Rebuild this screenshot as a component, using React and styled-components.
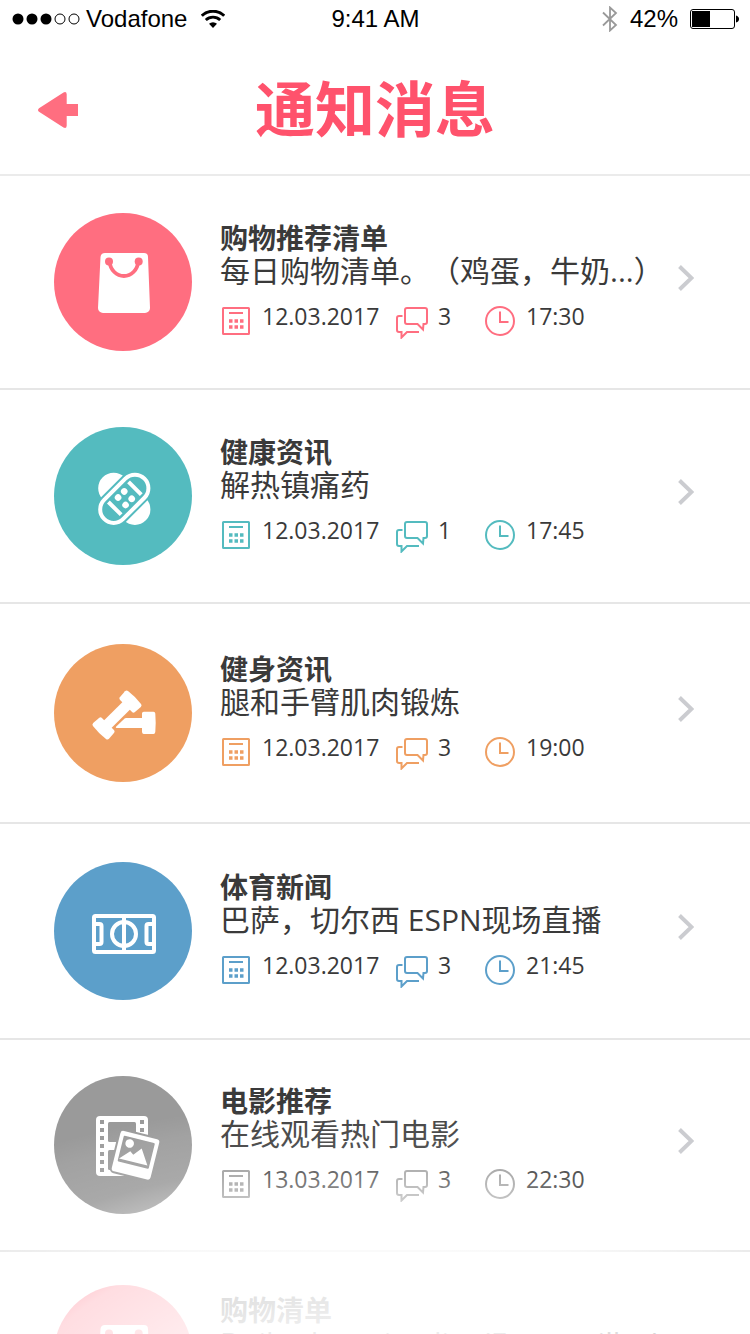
import React from "react";
import styled, { createGlobalStyle } from "styled-components";

const items = [
  {
    id: 1,
    title: "购物推荐清单",
    text: "每日购物清单。（鸡蛋，牛奶...）",
    date: "12.03.2017",
    comments: 3,
    time: "17:30",
    color: "#ff6e80",
    icon: BagIcon,
    height: 214
  },
  {
    id: 2,
    title: "健康资讯",
    text: "解热镇痛药",
    date: "12.03.2017",
    comments: 1,
    time: "17:45",
    color: "#54bbbf",
    icon: BandageIcon,
    height: 214
  },
  {
    id: 3,
    title: "健身资讯",
    text: "腿和手臂肌肉锻炼",
    date: "12.03.2017",
    comments: 3,
    time: "19:00",
    color: "#ef9f62",
    icon: DumbbellIcon,
    height: 220
  },
  {
    id: 4,
    title: "体育新闻",
    text: "巴萨，切尔西 ESPN现场直播",
    date: "12.03.2017",
    comments: 3,
    time: "21:45",
    color: "#5c9fca",
    icon: FieldIcon,
    height: 216
  },
  {
    id: 5,
    title: "电影推荐",
    text: "在线观看热门电影",
    date: "13.03.2017",
    comments: 3,
    time: "22:30",
    color: "#9a9a9a",
    icon: FilmIcon,
    height: 212
  },
  {
    id: 6,
    title: "购物清单",
    text: "Daily shopping list (Eggs, milk...)",
    date: "13.03.2017",
    comments: 3,
    time: "22:45",
    color: "#ff6e80",
    icon: BagIcon,
    height: 206
  }
];

function BagIcon() {
  return (
    <svg viewBox="0 0 138 138" aria-hidden="true">
      <path
        fill="#fff"
        d="M51 40h39a4 4 0 0 1 4 4l2 51a5 5 0 0 1-5 5H49a5 5 0 0 1-5-5l2.500-51a4.500 4.500 0 0 1 4.500-4z"
      />
      <circle cx="55" cy="48.500" r="4" fill="currentColor" />
      <circle cx="84.700" cy="48.500" r="4" fill="currentColor" />
      <path
        d="M55.500 49c1 8 7 14 14.400 14s13.400-6 14.400-14"
        fill="none"
        stroke="currentColor"
        strokeWidth="3.800"
      />
    </svg>
  );
}

function BandageIcon() {
  return (
    <svg viewBox="0 0 138 138" aria-hidden="true">
      <g transform="translate(70.3 71.800)">
        <rect x="-30.500" y="-15.500" width="61" height="31" rx="15.500" fill="#fff" transform="rotate(45)" />
        <g transform="rotate(-45)">
          <rect x="-32.500" y="-17.500" width="65" height="35" rx="17.500" fill="currentColor" />
          <rect x="-28.500" y="-13.500" width="57" height="27" rx="13.500" fill="none" stroke="#fff" strokeWidth="4" />
          <path d="M-13.500-9V9M15-9V9" stroke="#fff" strokeWidth="4" />
          <g fill="#fff">
            <circle cx="-3.500" cy="-5.300" r="3.300" />
            <circle cx="5.200" cy="-5.300" r="3.300" />
            <circle cx="-3.500" cy="5.300" r="3.300" />
            <circle cx="5.200" cy="5.300" r="3.300" />
          </g>
        </g>
      </g>
    </svg>
  );
}

function DumbbellIcon() {
  return (
    <svg viewBox="0 0 138 138" aria-hidden="true">
      <g fill="#fff">
        <path d="M62.500 84a.7.7 0 0 1-.5-1.200l8.600-8.200a2 2 0 0 1 1.400-.6h16V69.500q0-1.800 1.800-1.800h9.700q1.600 0 1.800 1.800.8 9.300 0 18.600-.2 1.900-1.800 1.900h-9.700q-1.600 0-1.800-1.900V84z" />
        <g transform="translate(63 71) rotate(-45)">
          <rect x="-15" y="-5.300" width="30" height="10.600" />
          <path d="M14.500-10.500 22.500-11.200q2 0 2.300 2Q26 0 24.800 9.200q-.3 2-2.300 2L14.500 10.500q-1.700-.2-1.700-2V-8.500q0-1.800 1.700-2z" />
          <path d="M-14.500-10.500-22.500-11.200q-2 0-2.300 2Q-26 0-24.800 9.200q.3 2 2.300 2L-14.500 10.500q1.700-.2 1.700-2V-8.500q0-1.800-1.700-2z" />
        </g>
      </g>
    </svg>
  );
}

function FieldIcon() {
  return (
    <svg viewBox="0 0 138 138" fill="none" stroke="#fff" strokeWidth="4" aria-hidden="true">
      <rect x="40" y="54" width="60" height="36" rx="1.500" />
      <circle cx="70" cy="72" r="12" />
      <path d="M70 54v36M40 62h5.500a2 2 0 0 1 2 2v16a2 2 0 0 1-2 2H40M100 62h-5.500a2 2 0 0 0-2 2v16a2 2 0 0 0 2 2h5.500" />
    </svg>
  );
}

function FilmIcon() {
  return (
    <svg viewBox="0 0 138 138" aria-hidden="true">
      <rect x="42" y="40" width="52" height="60" rx="4" fill="#fff" />
      <g fill="currentColor">
        {[44, 52, 60, 68, 76, 84, 92].map(y => (
          <path key={y} d={`M46 ${y}h4v4h-4zM86 ${y}h4v4h-4z`} />
        ))}
        <rect x="54" y="46" width="28" height="20" rx="1.500" />
        <rect x="54" y="74" width="28" height="20" rx="1.500" />
      </g>
      <g transform="translate(81.500 79.300) rotate(14)">
        <rect x="-22" y="-22.800" width="44" height="45.500" rx="5" fill="currentColor" />
        <rect x="-20" y="-20.800" width="40" height="41.500" rx="3" fill="#fff" />
        <rect x="-16" y="-16.300" width="32" height="26.500" rx="1" fill="currentColor" />
        <circle cx="-8.500" cy="-10" r="4.300" fill="#fff" />
        <path d="M-15.200 7.200-6-2.600l3.700 2.500L4.400-8 14 7z" fill="#fff" />
      </g>
    </svg>
  );
}

function CalendarIcon() {
  return (
    <MetaSvg viewBox="0 0 32 34" aria-hidden="true">
      <rect x="3" y="3" width="26" height="26" rx=".5" />
      <path d="M9 8h14" />
      <path d="M9 16h3.500m2 0H18m2 0h3.500M9 22h3.500m2 0H18m2 0h3.500" strokeWidth="3.500" />
    </MetaSvg>
  );
}

function ChatIcon() {
  return (
    <MetaSvg viewBox="0 0 32 34" aria-hidden="true">
      <path d="M11 3h18a2 2 0 0 1 2 2v12a2 2 0 0 1-2 2h-1.500l-.5 5.500-5.500-5.500H11a2 2 0 0 1-2-2V5a2 2 0 0 1 2-2z" />
      <path d="M6.500 11H3a2 2 0 0 0-2 2v12a2 2 0 0 0 2 2h2.500v5.500L11 27h12" />
    </MetaSvg>
  );
}

function ClockIcon() {
  return (
    <MetaSvg viewBox="0 0 32 34" aria-hidden="true">
      <circle cx="16" cy="16" r="14" />
      <path d="M16 6.500V17h8.500" />
    </MetaSvg>
  );
}

function StatusBar() {
  return (
    <Status>
      <StatusLeft>
        <svg width="68" height="12" viewBox="0 0 68 12" aria-hidden="true">
          <circle cx="6" cy="6" r="5.500" />
          <circle cx="20" cy="6" r="5.500" />
          <circle cx="34" cy="6" r="5.500" />
          <circle cx="48" cy="6" r="5" fill="none" stroke="#000" />
          <circle cx="62" cy="6" r="5" fill="none" stroke="#000" />
        </svg>
        <Carrier>Vodafone</Carrier>
        <svg width="24" height="18" viewBox="0 0 24 18" fill="none" stroke="#000" aria-hidden="true">
          <path d="M.8 5.800a16 16 0 0 1 22.400 0" strokeWidth="3" />
          <path d="M4.800 10a10.300 10.300 0 0 1 14.400 0" strokeWidth="2.800" />
          <path d="M8 13.800a5.800 5.800 0 0 1 8 0L12 18z" fill="#000" stroke="none" />
        </svg>
      </StatusLeft>
      <span>9:41 AM</span>
      <StatusRight>
        <svg width="16" height="26" viewBox="0 0 16 26" fill="none" stroke="#999" strokeWidth="1.800" aria-hidden="true">
          <path d="M1 6.500 14 19l-6 5.500v-23L14 7 1 19.500" />
        </svg>
        <span>42%</span>
        <svg width="49" height="20" viewBox="0 0 49 20" aria-hidden="true">
          <rect x=".5" y=".5" width="44" height="19" rx="2.500" fill="none" stroke="#000" />
          <rect x="2" y="2" width="18" height="16" />
          <path d="M46 6.500q3 1 3 3.500t-3 3.500z" />
        </svg>
      </StatusRight>
    </Status>
  );
}

function Notification({ item }) {
  const Icon = item.icon;
  return (
    <Item>
      <ItemLink href={`#notification-${item.id}`} $height={item.height}>
        <Badge $color={item.color}>
          <Icon />
        </Badge>
        <Content>
          <ItemTitle>{item.title}</ItemTitle>
          <ItemText>{item.text}</ItemText>
          <MetaRow $color={item.color}>
            <Meta>
              <CalendarIcon />
              <span>{item.date}</span>
            </Meta>
            <Meta>
              <ChatIcon />
              <span>{item.comments}</span>
            </Meta>
            <Meta>
              <ClockIcon />
              <span>{item.time}</span>
            </Meta>
          </MetaRow>
        </Content>
        <Chevron viewBox="0 0 16 26" aria-hidden="true">
          <path d="M1.500 1.500 13.500 13l-12 11.500" />
        </Chevron>
      </ItemLink>
    </Item>
  );
}

function App() {
  return (
    <Screen>
      <GlobalStyle />
      <StatusBar />
      <Header>
        <BackButton type="button" aria-label="返回">
          <svg width="40" height="36" viewBox="0 0 40 36" aria-hidden="true">
            <path d="M1 16.200 25.500.5q3-1.300 3.200 1.800V12H40v12H28.700v9.700q-.2 3.100-3.200 1.800L1 19.800q-2-1.800 0-3.600z" />
          </svg>
        </BackButton>
        <Title>通知消息</Title>
      </Header>
      <List>
        {items.map(item => (
          <Notification key={item.id} item={item} />
        ))}
      </List>
      <Fade />
    </Screen>
  );
}

const GlobalStyle = createGlobalStyle`
  * {
    box-sizing: border-box;
  }

  body {
    margin: 0;
    background-color: #fff;
    color: #3a3a3a;
    font-family: "Open Sans", "Noto Sans CJK SC", sans-serif;
  }
`;

const Screen = styled.div`
  position: relative;
  display: flex;
  flex-direction: column;
  height: 100vh;
  overflow: hidden;
`;

const Status = styled.div`
  display: grid;
  grid-template-columns: 1fr auto 1fr;
  align-items: center;
  flex-shrink: 0;
  height: 38px;
  padding: 0 11px 0 12px;
  color: #000;
  font-family: "Liberation Sans", sans-serif;
  font-size: 24px;
  line-height: 28px;
`;

const StatusLeft = styled.div`
  display: flex;
  align-items: center;
`;

const StatusRight = styled.div`
  display: flex;
  align-items: center;
  justify-content: flex-end;
  gap: 12px;
`;

const Carrier = styled.span`
  margin: 0 14px 0 6px;
`;

const Header = styled.header`
  display: grid;
  grid-template-columns: 1fr auto 1fr;
  align-items: center;
  flex-shrink: 0;
  height: 138px;
  padding: 8px 38px 0;
  border-bottom: 2px solid #ebebeb;
`;

const BackButton = styled.button`
  display: flex;
  justify-self: start;
  padding: 0;
  border: 0;
  background: none;
  cursor: pointer;

  svg {
    fill: #ff6e80;
  }
`;

const Title = styled.h1`
  margin: 0;
  padding-bottom: 8px;
  color: #ff526c;
  font-family: "Noto Sans CJK SC", sans-serif;
  font-size: 60px;
  font-weight: 700;
  line-height: 80px;
`;

const List = styled.ul`
  flex: 1;
  min-height: 0;
  margin: 0;
  padding: 0;
  overflow: hidden;
  list-style: none;
`;

const Item = styled.li`
  border-bottom: 2px solid #e6e6e6;
`;

const ItemLink = styled.a`
  display: flex;
  align-items: center;
  height: ${props => props.$height - 2}px;
  padding: 0 56px 0 54px;
  color: inherit;
  text-decoration: none;
`;

const Badge = styled.div`
  flex-shrink: 0;
  width: 138px;
  height: 138px;
  border-radius: 50%;
  background-color: ${props => props.$color};
  color: ${props => props.$color};

  svg {
    display: block;
  }
`;

const Content = styled.div`
  flex: 1;
  min-width: 0;
  margin-left: 28px;
  padding-bottom: 4px;
`;

const ItemTitle = styled.h2`
  margin: 0;
  font-size: 28px;
  font-weight: 700;
  line-height: 34px;
`;

const ItemText = styled.p`
  margin: 0;
  font-size: 30px;
  font-weight: 400;
  line-height: 32px;
  white-space: nowrap;
  text-spacing-trim: space-all;
`;

const MetaRow = styled.div`
  display: grid;
  grid-template-columns: 176px 88px auto;
  margin-top: 15px;

  svg {
    color: ${props => props.$color};
  }
`;

const Meta = styled.div`
  display: flex;
  align-items: flex-end;
  gap: 10px;
  height: 37px;

  span {
    align-self: flex-start;
    font-size: 23px;
    line-height: 28px;
  }
`;

const MetaSvg = styled.svg`
  flex-shrink: 0;
  width: 32px;
  height: 34px;
  fill: none;
  stroke: currentColor;
  stroke-width: 2;
`;

const Chevron = styled.svg`
  flex-shrink: 0;
  width: 16px;
  height: 26px;
  margin-bottom: 8px;
  fill: none;
  stroke: #cbccd0;
  stroke-width: 4;
`;

/* soft white dome over the end of the list */
const Fade = styled.div`
  position: absolute;
  right: 0;
  bottom: 0;
  left: 0;
  height: 240px;
  pointer-events: none;
  background: radial-gradient(
    83% 300px at 50% 306px,
    rgba(255, 255, 255, 0.92) 0%,
    rgba(255, 255, 255, 0.9) 30%,
    rgba(255, 255, 255, 0.85) 40%,
    rgba(255, 255, 255, 0.77) 56%,
    rgba(255, 255, 255, 0.3) 74%,
    rgba(255, 255, 255, 0.15) 80%,
    rgba(255, 255, 255, 0.08) 93%,
    rgba(255, 255, 255, 0) 100%
  );
`;

export default App;
